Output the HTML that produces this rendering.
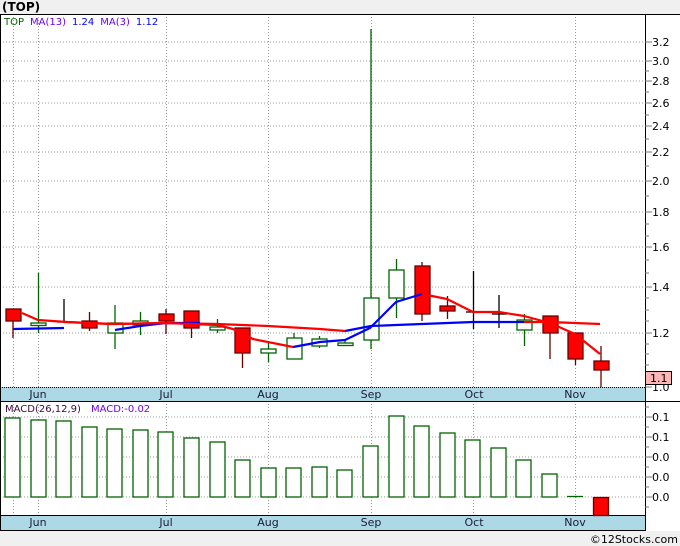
<!DOCTYPE html>
<html><head><meta charset="utf-8"><style>
html,body{margin:0;padding:0;background:#fff;}
svg{display:block;font-family:"DejaVu Sans","Liberation Sans",sans-serif;}
</style></head><body>
<svg width="680" height="546" viewBox="0 0 680 546" xmlns="http://www.w3.org/2000/svg">
<rect x="0" y="0" width="680" height="546" fill="#fff"/>
<rect x="0" y="0" width="680" height="14" fill="#f0f0f0"/>
<text x="2" y="11" font-size="12" font-weight="bold" fill="#000">(TOP)</text>
<rect x="0" y="531" width="680" height="15" fill="#f0f0f0"/>
<text x="678" y="543" font-size="11" text-anchor="end" fill="#000">©12Stocks.com</text>
<g stroke="#999" stroke-width="1" stroke-dasharray="1,2" fill="none">
<line x1="0" y1="42" x2="645" y2="42"/><line x1="0" y1="61" x2="645" y2="61"/><line x1="0" y1="81" x2="645" y2="81"/><line x1="0" y1="103" x2="645" y2="103"/><line x1="0" y1="126" x2="645" y2="126"/><line x1="0" y1="152" x2="645" y2="152"/><line x1="0" y1="181" x2="645" y2="181"/><line x1="0" y1="212" x2="645" y2="212"/><line x1="0" y1="247" x2="645" y2="247"/><line x1="0" y1="287" x2="645" y2="287"/><line x1="0" y1="333" x2="645" y2="333"/>
<line x1="0" y1="417" x2="645" y2="417"/><line x1="0" y1="437" x2="645" y2="437"/><line x1="0" y1="457" x2="645" y2="457"/><line x1="0" y1="477" x2="645" y2="477"/><line x1="0" y1="497" x2="645" y2="497"/>
<line x1="13.5" y1="14" x2="13.5" y2="531"/><line x1="38.5" y1="14" x2="38.5" y2="531"/><line x1="166.5" y1="14" x2="166.5" y2="531"/><line x1="268.5" y1="14" x2="268.5" y2="531"/><line x1="371.5" y1="14" x2="371.5" y2="531"/><line x1="473.5" y1="14" x2="473.5" y2="531"/><line x1="575.5" y1="14" x2="575.5" y2="531"/>
</g>
<text x="4" y="25" font-size="10"><tspan fill="#006400">TOP</tspan><tspan fill="#6a00ff" dx="6">MA(13)</tspan><tspan fill="#0000ff" dx="6">1.24</tspan><tspan fill="#6a00ff" dx="6">MA(3)</tspan><tspan fill="#0000ff" dx="6">1.12</tspan></text>
<g stroke-width="1.3">
<g stroke="#660000" fill="#ff0000"><line x1="13" y1="321" x2="13" y2="338"/><rect x="6" y="309" width="15" height="12"/></g>
<g stroke="#006400" fill="#fff"><line x1="38.5" y1="273" x2="38.5" y2="333"/><rect x="31" y="323" width="15" height="2.5"/></g>
<g stroke="#000"><line x1="64" y1="299" x2="64" y2="323"/><line x1="57" y1="322" x2="72" y2="322"/></g>
<g stroke="#660000" fill="#ff0000"><line x1="89.5" y1="312" x2="89.5" y2="331"/><rect x="82" y="321" width="15" height="7"/></g>
<g stroke="#006400" fill="#fff"><line x1="115" y1="305" x2="115" y2="349"/><rect x="108" y="323" width="15" height="10"/></g>
<g stroke="#006400" fill="#fff"><line x1="140.5" y1="312" x2="140.5" y2="335"/><rect x="133" y="321" width="15" height="4"/></g>
<g stroke="#660000" fill="#ff0000"><line x1="166" y1="309" x2="166" y2="334"/><rect x="159" y="314" width="15" height="7"/></g>
<g stroke="#660000" fill="#ff0000"><line x1="191.5" y1="328" x2="191.5" y2="338"/><rect x="184" y="311" width="15" height="17"/></g>
<g stroke="#006400" fill="#fff"><line x1="217.5" y1="319" x2="217.5" y2="333"/><rect x="210" y="327" width="15" height="3"/></g>
<g stroke="#660000" fill="#ff0000"><line x1="242.5" y1="353" x2="242.5" y2="368"/><rect x="235" y="328" width="15" height="25"/></g>
<g stroke="#006400" fill="#fff"><line x1="268.5" y1="342" x2="268.5" y2="362"/><rect x="261" y="349" width="15" height="4"/></g>
<g stroke="#006400" fill="#fff"><line x1="294" y1="333" x2="294" y2="359"/><rect x="287" y="338" width="15" height="21"/></g>
<g stroke="#006400" fill="#fff"><line x1="319.5" y1="336" x2="319.5" y2="348"/><rect x="312" y="339" width="15" height="7"/></g>
<g stroke="#006400" fill="#fff"><line x1="345" y1="341" x2="345" y2="346"/><rect x="338" y="343" width="15" height="2.5"/></g>
<g stroke="#006400" fill="#fff"><line x1="371" y1="29" x2="371" y2="349"/><rect x="364" y="298" width="15" height="42"/></g>
<g stroke="#006400" fill="#fff"><line x1="396.5" y1="259" x2="396.5" y2="318"/><rect x="389" y="270" width="15" height="28"/></g>
<g stroke="#660000" fill="#ff0000"><line x1="422" y1="262" x2="422" y2="321"/><rect x="415" y="266" width="15" height="48"/></g>
<g stroke="#660000" fill="#ff0000"><line x1="447.5" y1="296" x2="447.5" y2="319"/><rect x="440" y="306" width="15" height="5"/></g>
<g stroke="#000"><line x1="473.5" y1="271" x2="473.5" y2="329"/><line x1="466" y1="312" x2="481" y2="312"/></g>
<g stroke="#000"><line x1="499" y1="295" x2="499" y2="328"/><line x1="492" y1="314" x2="507" y2="314"/></g>
<g stroke="#006400" fill="#fff"><line x1="524.5" y1="314" x2="524.5" y2="346"/><rect x="517" y="320" width="15" height="10"/></g>
<g stroke="#660000" fill="#ff0000"><line x1="550" y1="333" x2="550" y2="359"/><rect x="543" y="316" width="15" height="17"/></g>
<g stroke="#660000" fill="#ff0000"><line x1="575.5" y1="359" x2="575.5" y2="365"/><rect x="568" y="333" width="15" height="26"/></g>
<g stroke="#660000" fill="#ff0000"><line x1="601" y1="346" x2="601" y2="387"/><rect x="594" y="361" width="15" height="9"/></g>
</g>
<g fill="none" stroke-width="2.2" stroke-linejoin="round">
<polyline stroke="#0000ff" points="13,329 64,328"/>
<polyline stroke="#ff0000" points="64,322 115,324 166,323 217,324 268,326 320,329 345,331"/>
<polyline stroke="#0000ff" points="115,330 140,326 166,323 200,323"/>
<polyline stroke="#0000ff" points="345,331 371,326 396,325 422,324 473,322 524,322"/>
<polyline stroke="#ff0000" points="524,322 550,322 600,324"/>
<polyline stroke="#ff0000" points="22,313 38,320 67,322 110,324 166,323 217,325 233,329 253,339 293,347"/>
<polyline stroke="#0000ff" points="293,347 320,342 345,340 370,328 396,302 422,294"/>
<polyline stroke="#ff0000" points="422,294 447,299 473,312 499,312 524,316 550,323 575,334 600,354"/>
</g>
<rect x="0" y="387" width="645" height="14" fill="#add8e6"/>
<line x1="0" y1="387.5" x2="645" y2="387.5" stroke="#000" stroke-dasharray="1,1"/>
<line x1="0" y1="401.5" x2="680" y2="401.5" stroke="#000"/>
<rect x="0" y="516" width="645" height="15" fill="#add8e6"/>
<line x1="0" y1="515.5" x2="645" y2="515.5" stroke="#000"/>
<line x1="0" y1="530.5" x2="645" y2="530.5" stroke="#000"/>
<g font-size="11" fill="#1a1a3a" text-anchor="middle">
<text x="38" y="398">Jun</text><text x="166" y="398">Jul</text><text x="268" y="398">Aug</text><text x="371" y="398">Sep</text><text x="474" y="398">Oct</text><text x="575" y="398">Nov</text>
<text x="38" y="526">Jun</text><text x="166" y="526">Jul</text><text x="268" y="526">Aug</text><text x="371" y="526">Sep</text><text x="474" y="526">Oct</text><text x="575" y="526">Nov</text>
</g>
<text x="5" y="412" font-size="10"><tspan fill="#3a0a3a">MACD(26,12,9)</tspan><tspan fill="#6a00ff" dx="10">MACD:-0.02</tspan></text>
<g stroke="#006400" stroke-width="1.3" fill="#fff">
<rect x="5" y="418" width="15" height="79"/><rect x="31" y="420" width="15" height="77"/><rect x="56" y="421" width="15" height="76"/><rect x="82" y="427" width="15" height="70"/><rect x="107" y="429" width="15" height="68"/><rect x="133" y="430" width="15" height="67"/><rect x="158" y="432" width="15" height="65"/><rect x="184" y="438" width="15" height="59"/><rect x="210" y="442" width="15" height="55"/><rect x="235" y="460" width="15" height="37"/><rect x="261" y="468" width="15" height="29"/><rect x="286" y="468" width="15" height="29"/><rect x="312" y="467" width="15" height="30"/><rect x="337" y="470" width="15" height="27"/><rect x="363" y="446" width="15" height="51"/><rect x="389" y="416" width="15" height="81"/><rect x="414" y="426" width="15" height="71"/><rect x="440" y="433" width="15" height="64"/><rect x="465" y="440" width="15" height="57"/><rect x="491" y="448" width="15" height="49"/><rect x="516" y="460" width="15" height="37"/><rect x="542" y="474" width="15" height="23"/>
<line x1="567" y1="496.5" x2="583" y2="496.5"/>
</g>
<rect x="593.5" y="497.5" width="15" height="18" fill="#ff0000" stroke="#660000" stroke-width="1.3"/>
<line x1="645.5" y1="14" x2="645.5" y2="531" stroke="#000"/>
<line x1="0.5" y1="14" x2="0.5" y2="531" stroke="#000"/>
<line x1="0" y1="14.5" x2="680" y2="14.5" stroke="#000"/>
<g stroke="#777">
<line x1="645" y1="42" x2="652" y2="42"/><line x1="645" y1="61" x2="652" y2="61"/><line x1="645" y1="71" x2="649" y2="71"/><line x1="645" y1="81" x2="652" y2="81"/><line x1="645" y1="92" x2="649" y2="92"/><line x1="645" y1="103" x2="652" y2="103"/><line x1="645" y1="115" x2="649" y2="115"/><line x1="645" y1="126" x2="652" y2="126"/><line x1="645" y1="139" x2="649" y2="139"/><line x1="645" y1="152" x2="652" y2="152"/><line x1="645" y1="166" x2="649" y2="166"/><line x1="645" y1="181" x2="652" y2="181"/><line x1="645" y1="196" x2="649" y2="196"/><line x1="645" y1="212" x2="652" y2="212"/><line x1="645" y1="224" x2="649" y2="224"/><line x1="645" y1="236" x2="649" y2="236"/><line x1="645" y1="247" x2="652" y2="247"/><line x1="645" y1="260" x2="649" y2="260"/><line x1="645" y1="273" x2="649" y2="273"/><line x1="645" y1="287" x2="652" y2="287"/><line x1="645" y1="298" x2="649" y2="298"/><line x1="645" y1="310" x2="649" y2="310"/><line x1="645" y1="321" x2="649" y2="321"/><line x1="645" y1="333" x2="652" y2="333"/><line x1="645" y1="344" x2="649" y2="344"/><line x1="645" y1="354" x2="649" y2="354"/><line x1="645" y1="365" x2="649" y2="365"/><line x1="645" y1="387" x2="652" y2="387"/>
<line x1="645" y1="407" x2="649" y2="407"/><line x1="645" y1="417" x2="652" y2="417"/><line x1="645" y1="427" x2="649" y2="427"/><line x1="645" y1="437" x2="652" y2="437"/><line x1="645" y1="447" x2="649" y2="447"/><line x1="645" y1="457" x2="652" y2="457"/><line x1="645" y1="467" x2="649" y2="467"/><line x1="645" y1="477" x2="652" y2="477"/><line x1="645" y1="487" x2="649" y2="487"/><line x1="645" y1="497" x2="652" y2="497"/><line x1="645" y1="507" x2="649" y2="507"/>
</g>
<g font-size="11" fill="#000">
<text x="652" y="46">3.2</text><text x="652" y="65">3.0</text><text x="652" y="85">2.8</text><text x="652" y="107">2.6</text><text x="652" y="130">2.4</text><text x="652" y="156">2.2</text><text x="652" y="185">2.0</text><text x="652" y="216">1.8</text><text x="652" y="251">1.6</text><text x="652" y="291">1.4</text><text x="652" y="337">1.2</text><text x="652" y="391">1.0</text>
<text x="652" y="421">0.1</text><text x="652" y="441">0.1</text><text x="652" y="461">0.0</text><text x="652" y="481">0.0</text><text x="652" y="501">0.0</text>
</g>
<rect x="645.5" y="371.5" width="26" height="13" fill="#ffb6b6" stroke="#000"/>
<text x="650" y="382" font-size="11" fill="#000">1.1</text>
</svg>
</body></html>
